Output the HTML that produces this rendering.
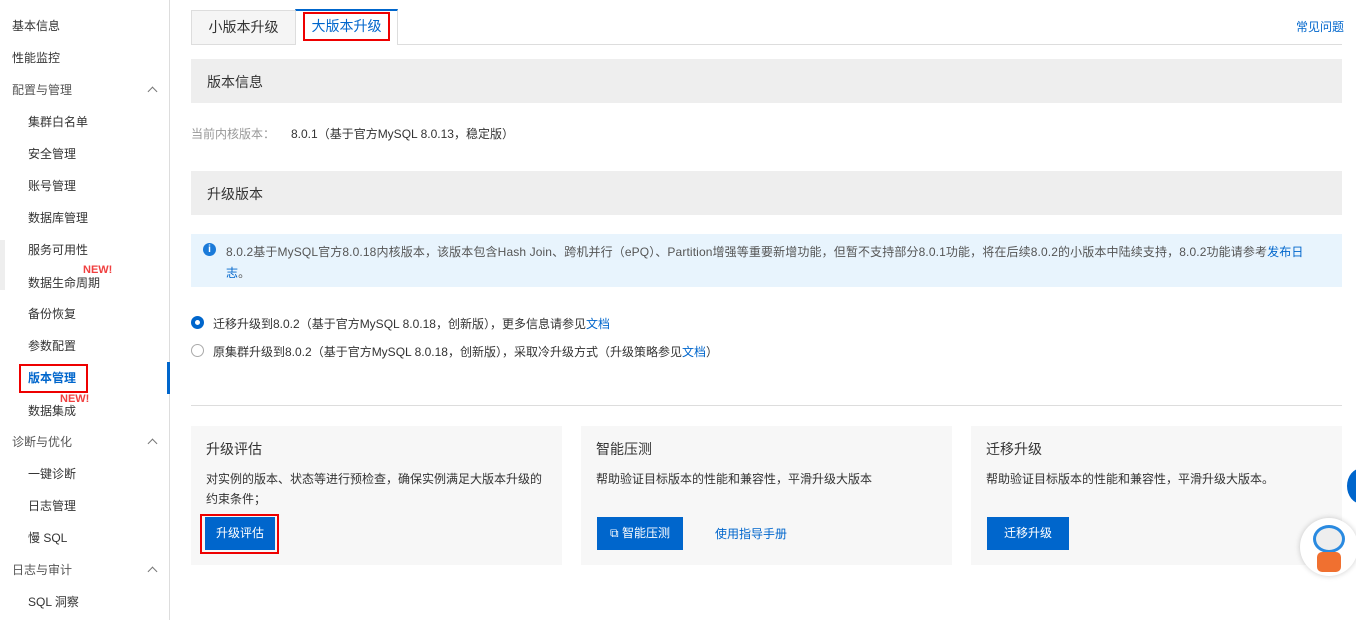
<!DOCTYPE html><html><head><meta charset="utf-8"><style>
*{margin:0;padding:0;box-sizing:border-box}
body{width:1356px;height:620px;overflow:hidden;background:#fff;font-family:"Liberation Sans","Noto Sans CJK SC",sans-serif;font-size:12px;color:#333;position:relative}
.a{position:absolute;white-space:nowrap}
.side{position:absolute;left:0;top:0;width:170px;height:620px;border-right:1px solid #ddd}
.si{position:absolute;font-size:12px;color:#333;line-height:16px}
.grp{color:#555}
.chev{position:absolute;left:149px;width:7px;height:7px;border-left:1px solid #777;border-top:1px solid #777;transform:rotate(45deg)}
.new{position:absolute;color:#f04040;font-weight:bold;font-size:11px}
.bar{position:absolute;left:191px;width:1151px;height:44px;background:#eeeeee;font-size:14px;color:#333;padding:13px 16px}
.card{position:absolute;top:426px;width:371px;height:139px;background:#f7f7f7;padding:13px 15px}
.card h4{font-size:14px;font-weight:normal;color:#333;margin-bottom:10px}
.card p{font-size:12px;color:#333;line-height:20px}
.btn{position:absolute;top:91px;height:33px;background:#0066cc;color:#fff;font-size:12px;line-height:33px;text-align:center}
.blue{color:#0066cc}
.radio{position:absolute;left:191px;width:13px;height:13px;border-radius:50%;border:1px solid #aaa;background:#fff}
</style></head><body>
<div class="side">
<div class="si" style="left:12px;top:18px">基本信息</div>
<div class="si" style="left:12px;top:50px">性能监控</div>
<div class="si grp" style="left:12px;top:82px">配置与管理</div><div class="chev" style="top:88px"></div>
<div class="si" style="left:28px;top:114px">集群白名单</div>
<div class="si" style="left:28px;top:146px">安全管理</div>
<div class="si" style="left:28px;top:178px">账号管理</div>
<div class="si" style="left:28px;top:210px">数据库管理</div>
<div style="position:absolute;left:0;top:240px;width:5px;height:50px;background:#eee"></div>
<div class="si" style="left:28px;top:242px">服务可用性</div>
<div class="new" style="left:83px;top:264px">NEW!</div>
<div class="si" style="left:28px;top:275px">数据生命周期</div>
<div class="si" style="left:28px;top:306px">备份恢复</div>
<div class="si" style="left:28px;top:338px">参数配置</div>
<div style="position:absolute;left:19px;top:364px;width:69px;height:29px;border:2px solid #e00"></div>
<div class="si blue" style="left:28px;top:370px;font-weight:bold">版本管理</div>
<div style="position:absolute;left:167px;top:362px;width:3px;height:32px;background:#0066cc"></div>
<div class="new" style="left:60px;top:393px">NEW!</div>
<div class="si" style="left:28px;top:403px">数据集成</div>
<div class="si grp" style="left:12px;top:434px">诊断与优化</div><div class="chev" style="top:440px"></div>
<div class="si" style="left:28px;top:466px">一键诊断</div>
<div class="si" style="left:28px;top:498px">日志管理</div>
<div class="si" style="left:28px;top:530px">慢 SQL</div>
<div class="si grp" style="left:12px;top:562px">日志与审计</div><div class="chev" style="top:568px"></div>
<div class="si" style="left:28px;top:594px">SQL 洞察</div>
</div>

<div class="a" style="left:191px;top:10px;width:105px;height:35px;background:#f5f5f5;border:1px solid #ddd;font-size:14px;line-height:33px;text-align:center;color:#333">小版本升级</div>
<div class="a" style="left:295px;top:9px;width:103px;height:36px;background:#fff;border:1px solid #ddd;border-top:2px solid #0066cc;border-bottom:none"></div>
<div class="a" style="left:303px;top:12px;width:87px;height:29px;border:2px solid #e00;font-size:14px;line-height:25px;text-align:center;color:#0066cc">大版本升级</div>
<div class="a" style="left:398px;top:44px;width:944px;height:1px;background:#ddd"></div>
<div class="a blue" style="left:1296px;top:18px">常见问题</div>

<div class="bar" style="top:59px">版本信息</div>
<div class="a" style="left:191px;top:125px;color:#999">当前内核版本：</div>
<div class="a" style="left:291px;top:125px">8.0.1（基于官方MySQL 8.0.13，稳定版）</div>
<div class="bar" style="top:171px">升级版本</div>
<div class="a" style="left:191px;top:234px;width:1151px;height:53px;background:#e8f4fd;"></div>
<div class="a" style="left:203px;top:243px;width:13px;height:13px;border-radius:50%;background:#1a7ad9;color:#fff;font-size:10px;font-weight:bold;line-height:13px;text-align:center">i</div>
<div class="a" style="left:226px;top:242px;line-height:21px;color:#555;letter-spacing:0.12px">8.0.2基于MySQL官方8.0.18内核版本，该版本包含Hash Join、跨机并行（ePQ）、Partition增强等重要新增功能，但暂不支持部分8.0.1功能，将在后续8.0.2的小版本中陆续支持，8.0.2功能请参考<span class="blue">发布日</span><br><span class="blue">志</span>。</div>

<div class="radio" style="top:316px;border:4px solid #0066cc"></div>
<div class="a" style="left:213px;top:315px">迁移升级到8.0.2（基于官方MySQL 8.0.18，创新版），更多信息请参见<span class="blue">文档</span></div>
<div class="radio" style="top:344px"></div>
<div class="a" style="left:213px;top:343px">原集群升级到8.0.2（基于官方MySQL 8.0.18，创新版），采取冷升级方式（升级策略参见<span class="blue">文档</span>）</div>
<div class="a" style="left:191px;top:405px;width:1151px;height:1px;background:#ddd"></div>

<div class="card" style="left:191px"><h4>升级评估</h4><p>对实例的版本、状态等进行预检查，确保实例满足大版本升级的<br>约束条件；</p>
<div class="a" style="left:9px;top:88px;width:79px;height:40px;border:2px solid #e00"></div>
<div class="btn" style="left:14px;width:70px">升级评估</div></div>
<div class="card" style="left:581px"><h4>智能压测</h4><p>帮助验证目标版本的性能和兼容性，平滑升级大版本</p>
<div class="btn" style="left:16px;width:86px">⧉ 智能压测</div>
<div class="a blue" style="left:134px;top:99px">使用指导手册</div></div>
<div class="card" style="left:971px"><h4>迁移升级</h4><p>帮助验证目标版本的性能和兼容性，平滑升级大版本。</p>
<div class="btn" style="left:16px;width:82px">迁移升级</div></div>

<div class="a" style="left:1347px;top:468px;width:30px;height:36px;border-radius:50%;background:#0066cc"></div>
<div class="a" style="left:1300px;top:518px;width:58px;height:58px;border-radius:50%;background:#fff;box-shadow:0 0 6px rgba(0,0,0,.2)"></div>
<div class="a" style="left:1313px;top:525px;width:32px;height:28px;border-radius:50%;background:#eee;border:3px solid #2a8ae0"></div>
<div class="a" style="left:1317px;top:552px;width:24px;height:20px;border-radius:5px;background:#f07030"></div>
</body></html>
